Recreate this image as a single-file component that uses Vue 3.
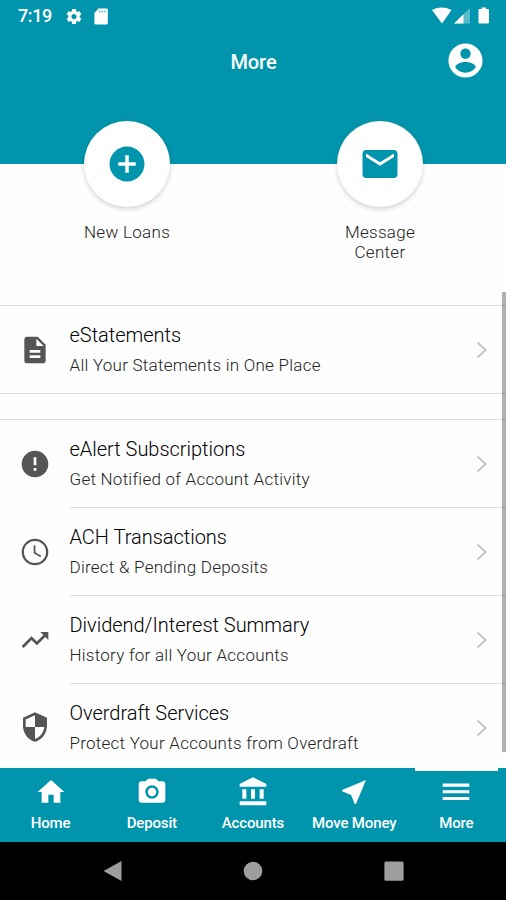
<script setup>
const icons = {
  gear: 'M19.43 12.98c.04-.32.07-.64.07-.98s-.03-.66-.07-.98l2.11-1.65c.19-.15.24-.42.12-.64l-2-3.46c-.12-.22-.39-.3-.61-.22l-2.49 1c-.52-.4-1.08-.73-1.69-.98l-.38-2.65C14.46 2.18 14.25 2 14 2h-4c-.25 0-.46.18-.49.42l-.38 2.65c-.61.25-1.17.59-1.69.98l-2.49-1c-.23-.09-.49 0-.61.22l-2 3.46c-.13.22-.07.49.12.64l2.11 1.65c-.04.32-.07.65-.07.98s.03.66.07.98l-2.11 1.65c-.19.15-.24.42-.12.64l2 3.46c.12.22.39.3.61.22l2.49-1c.52.4 1.08.73 1.69.98l.38 2.65c.03.24.24.42.49.42h4c.25 0 .46-.18.49-.42l.38-2.65c.61-.25 1.17-.59 1.69-.98l2.49 1c.23.09.49 0 .61-.22l2-3.46c.12-.22.07-.49-.12-.64l-2.11-1.65zM12 15.5c-1.93 0-3.5-1.57-3.5-3.5s1.57-3.5 3.5-3.5 3.5 1.57 3.5 3.5-1.57 3.5-3.5 3.5z',
  account: 'M12 2C6.48 2 2 6.48 2 12s4.48 10 10 10 10-4.48 10-10S17.52 2 12 2zm0 3c1.66 0 3 1.34 3 3s-1.34 3-3 3-3-1.34-3-3 1.34-3 3-3zm0 14.2c-2.5 0-4.71-1.28-6-3.22.03-1.99 4-3.08 6-3.08 1.99 0 5.97 1.09 6 3.08-1.29 1.94-3.5 3.22-6 3.22z',
  plus: 'M12 2C6.48 2 2 6.48 2 12s4.48 10 10 10 10-4.48 10-10S17.52 2 12 2zm5 11h-4v4h-2v-4H7v-2h4V7h2v4h4v2z',
  mail: 'M20 4H4c-1.1 0-1.99.9-1.99 2L2 18c0 1.1.9 2 2 2h16c1.1 0 2-.9 2-2V6c0-1.1-.9-2-2-2zm0 4l-8 5-8-5V6l8 5 8-5v2z',
  doc: 'M14 2H6c-1.1 0-1.99.9-1.99 2L4 20c0 1.1.89 2 1.99 2H18c1.1 0 2-.9 2-2V8l-6-6zm2 16H8v-2h8v2zm0-4H8v-2h8v2zm-3-5V3.5L18.5 9H13z',
  alert: 'M12 2C6.48 2 2 6.48 2 12s4.48 10 10 10 10-4.48 10-10S17.52 2 12 2zm1 15h-2v-2h2v2zm0-4h-2V7h2v6z',
  clock: 'M11.99 2C6.47 2 2 6.48 2 12s4.47 10 9.99 10C17.52 22 22 17.52 22 12S17.52 2 11.99 2zM12 20.3c-4.6 0-8.3-3.7-8.3-8.3s3.7-8.3 8.3-8.3 8.3 3.7 8.3 8.3-3.7 8.3-8.3 8.3zM12.3 7h-1.3v6l5 3 .7-1.150-4.400-2.600z',
  trend: 'M16 6l2.29 2.29-4.88 4.88-4-4L2 16.59 3.41 18l6-6 4 4 6.3-6.29L22 12V6z',
  shield: 'M12 1L3 5v6c0 5.55 3.84 10.74 9 12 5.16-1.26 9-6.45 9-12V5l-9-4zm0 10.99h7c-.53 4.12-3.28 7.79-7 8.94V12H5V6.3l7-3.11v8.8z',
  home: 'M10 20v-6h4v6h5v-8h3L12 3 2 12h3v8z',
  camera: 'M9 2L7.17 4H4c-1.1 0-2 .9-2 2v12c0 1.1.9 2 2 2h16c1.1 0 2-.9 2-2V6c0-1.1-.9-2-2-2h-3.17L15 2H9zm3 15c-2.76 0-5-2.24-5-5s2.24-5 5-5 5 2.24 5 5-2.24 5-5 5zm0-1.8a3.2 3.2 0 1 0 0-6.4 3.2 3.2 0 0 0 0 6.4z',
  bank: 'M4 10v7h3v-7H4zm6.5 0v7h3v-7h-3zM2 22h20v-3H2v3zM17 10v7h3v-7h-3zM12 1L2 6v2h20V6L12 1z',
  arrow: 'M21 3L3 10.53v.98l6.84 2.65L12.48 21h.98L21 3z',
  menu: 'M2 5.7h20v2.300H2zM2 10.700h20v2.300H2zM2 15.700h20v2.300H2z'
}
const groups = [
  [{ icon: 'doc', title: 'eStatements', sub: 'All Your Statements in One Place' }],
  [
    { icon: 'alert', title: 'eAlert Subscriptions', sub: 'Get Notified of Account Activity' },
    { icon: 'clock', title: 'ACH Transactions', sub: 'Direct & Pending Deposits' },
    { icon: 'trend', title: 'Dividend/Interest Summary', sub: 'History for all Your Accounts' },
    { icon: 'shield', title: 'Overdraft Services', sub: 'Protect Your Accounts from Overdraft' }
  ]
]
const tabs = [
  { icon: 'home', label: 'Home' },
  { icon: 'camera', label: 'Deposit' },
  { icon: 'bank', label: 'Accounts' },
  { icon: 'arrow', label: 'Move Money' },
  { icon: 'menu', label: 'More', active: true }
]
</script>

<template>
  <div class="screen">
    <header class="top">
      <div class="status">
        <span class="time">7:19</span>
        <svg class="gear" viewBox="0 0 24 24"><path :d="icons.gear" /></svg>
        <svg class="sd" viewBox="0 0 14 17"><path d="M4.500 0.500H12.500Q13.800 .5 13.800 1.800V15Q13.800 16.500 12.300 16.500H1.700Q.4 16.500 .4 15V5z" /><path class="pins" d="M5 2.500h1.500v2H5zM7.700 2.500h1.500v2H7.700zM10.300 2.500h1.500v2h-1.500z" /></svg>
        <svg class="signals" viewBox="0 0 58 18">
          <path d="M0 3Q9.500-1.800 19.500 3L10 16.500z" />
          <path class="dim" d="M38 1V16.500H22z" />
          <path d="M31.500 7.300V16.500H22z" />
          <path d="M47.500 2h2V.5h4.500V2h2q1 0 1 1v12.500q0 1-1 1h-8.500q-1 0-1-1V3q0-1 1-1z" />
        </svg>
      </div>
      <div class="bar">
        <h1>More</h1>
        <svg class="account" viewBox="0 0 24 24"><path :d="icons.account" /></svg>
      </div>
    </header>

    <section class="shortcuts">
      <div class="shortcut">
        <div class="disc"><svg viewBox="0 0 24 24"><path :d="icons.plus" /></svg></div>
        <span>New Loans</span>
      </div>
      <div class="shortcut">
        <div class="disc"><svg viewBox="0 0 24 24"><path :d="icons.mail" /></svg></div>
        <span>Message<br />Center</span>
      </div>
    </section>

    <main class="lists">
      <ul v-for="(group, g) in groups" :key="g" class="group">
        <li v-for="row in group" :key="row.title">
          <svg class="row-icon" viewBox="0 0 24 24"><path :d="icons[row.icon]" /></svg>
          <div class="row-body">
            <div class="row-text">
              <span class="title">{{ row.title }}</span>
              <span class="sub">{{ row.sub }}</span>
            </div>
            <svg class="chevron" viewBox="0 0 12 18"><path d="M1.500 1.500L9.500 9L1.500 16.500" /></svg>
          </div>
        </li>
      </ul>
    </main>
    <div class="scrollbar"></div>

    <nav class="tabs">
      <div v-for="tab in tabs" :key="tab.label" class="tab" :class="{ active: tab.active }">
        <svg viewBox="0 0 24 24"><path :d="icons[tab.icon]" /></svg>
        <span>{{ tab.label }}</span>
      </div>
    </nav>

    <footer class="system">
      <svg viewBox="0 0 20 22"><path d="M.5 11L18.500 1V21z" /></svg>
      <svg viewBox="0 0 20 22"><circle cx="10" cy="11" r="9.300" /></svg>
      <svg viewBox="0 0 20 22"><rect x=".4" y="1.500" width="19.200" height="19.200" rx="1.500" /></svg>
    </footer>
  </div>
</template>

<style>
body { margin: 0; background: #fefefe; }
</style>

<style scoped>
.screen {
  position: relative;
  display: flex;
  flex-direction: column;
  width: 506px;
  height: 900px;
  overflow: hidden;
  background: #fefefe;
  font-family: Roboto, sans-serif;
}
svg { display: block; flex: none; fill: currentColor; }
.top { height: 164px; flex: none; background: #0095ac; color: #fff; }
.status { display: flex; align-items: center; height: 32px; padding: 0 16px 0 18px; }
.time { width: 47px; font-size: 18px; font-weight: 500; line-height: 32px; letter-spacing: -.4px; }
.gear { width: 18px; height: 19px; }
.sd { width: 14px; height: 17px; margin-left: 11px; }
.pins { fill: #0095ac; opacity: .6; }
.signals { width: 58px; height: 18px; margin-left: auto; }
.dim { opacity: .35; }
.bar { display: grid; grid-template-columns: 1fr auto 1fr; align-items: center; height: 58px; }
h1 { grid-column: 2; margin: 2px 0 0 1px; font-size: 20px; font-weight: 500; line-height: 24px; letter-spacing: -.1px; }
.account { width: 41px; height: 41px; margin: -1px 20px 0 0; justify-self: end; }
.shortcuts { display: grid; grid-template-columns: 1fr 1fr; height: 184px; margin-top: -43px; flex: none; }
.shortcut { display: flex; flex-direction: column; align-items: center; }
.disc {
  display: flex;
  align-items: center;
  justify-content: center;
  width: 86px;
  height: 86px;
  border-radius: 50%;
  background: #fff;
  color: #0095ac;
  box-shadow: 0 2px 5px rgba(0, 0, 0, .18);
}
.disc svg { width: 42px; height: 42px; }
.shortcut span { margin: 15px 0 0 1px; font-size: 17px; font-weight: 300; line-height: 20px; text-align: center; color: #222; letter-spacing: .3px; }
.lists { display: flex; flex-direction: column; gap: 25px; flex: 1; min-height: 0; overflow: hidden; }
.group { margin: 0; padding: 0; list-style: none; border-top: 1px solid #dcdcdc; border-bottom: 1px solid #dcdcdc; flex: none; }
li { display: flex; align-items: stretch; height: 88px; }
li:only-child { height: 87px; }
.row-icon { width: 32px; height: 32px; margin: 27.500px 16px 0 19px; color: #555; }
li:last-child:not(:only-child) .row-icon { margin-top: 26.500px; }
.row-body { display: flex; flex: 1; align-items: center; justify-content: space-between; margin-left: 2.500px; padding-right: 18.500px; box-sizing: border-box; border-bottom: 1px solid transparent; }
li:not(:last-child) .row-body { border-bottom-color: #dcdcdc; }
.row-text { display: flex; flex-direction: column; gap: 6px; padding-top: 1px; }
.title { font-size: 20px; font-weight: 300; line-height: 24px; color: #000; letter-spacing: -.02px; }
.sub { font-size: 17px; font-weight: 300; line-height: 24px; color: #222; letter-spacing: .25px; }
.chevron { width: 12px; height: 18px; fill: none; stroke: #c4c4c4; stroke-width: 2; }
li:only-child .chevron { margin-top: 1px; }
.scrollbar { position: absolute; right: 0; top: 292px; width: 4px; height: 460px; background: rgba(0, 0, 0, .3); }
.tabs { display: grid; grid-template-columns: repeat(5, 1fr); height: 74px; flex: none; background: #0095ac; color: #fff; }
.tab { display: flex; flex-direction: column; align-items: center; box-sizing: border-box; padding-top: 8px; }
.tab svg { width: 32px; height: 32px; }
.tab span { margin-top: 5px; font-size: 15px; font-weight: 500; line-height: 20px; white-space: nowrap; letter-spacing: -.15px; }
.active { width: 83px; justify-self: center; margin-left: 2px; padding-top: 5px; border-top: 3px solid #fff; }
.system { display: flex; align-items: center; gap: 120.500px; height: 58px; flex: none; padding-left: 102.500px; background: #000; color: #9e9e9e; }
.system svg { width: 20px; height: 22px; }
</style>
